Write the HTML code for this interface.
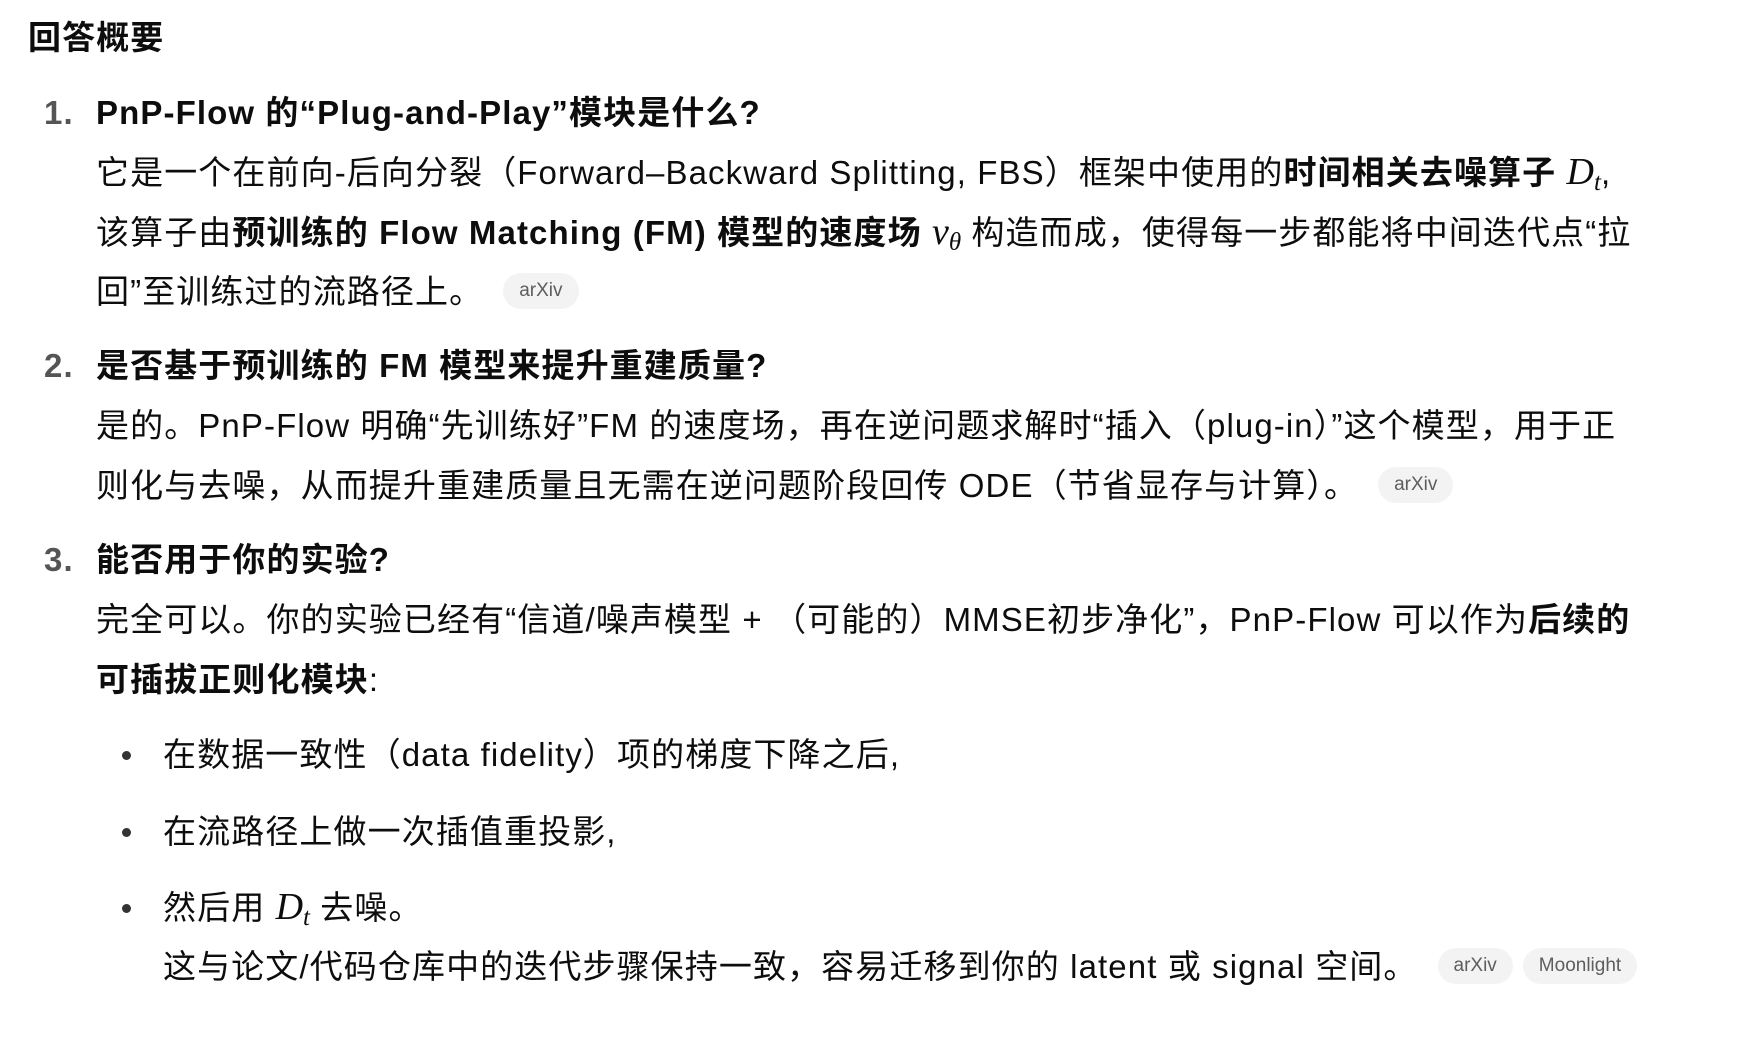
<!DOCTYPE html>
<html><head><meta charset="utf-8"><style>
html,body{margin:0;padding:0;background:#fff;width:1758px;height:1045px;overflow:hidden}
body{font-family:"Liberation Sans","Noto Sans CJK SC",sans-serif;color:#0d0d0d;font-size:33px;position:relative}
.l{position:absolute;white-space:nowrap;line-height:60px;height:60px;letter-spacing:1.1px}
b{font-weight:700}
.n{color:#555;font-weight:700}
.m{font-family:"Liberation Serif","DejaVu Serif",serif;font-style:italic;font-size:38px;letter-spacing:0}
.m sub{font-size:25px;vertical-align:-6px}
.chip{display:inline-block;background:#f3f3f3;color:#5d5d5d;font-size:19px;line-height:36px;height:36px;padding:0 16px;border-radius:18px;vertical-align:middle;margin-left:20px;position:relative;top:-3px;letter-spacing:0}
.dot{position:absolute;width:9px;height:9px;border-radius:50%;background:#333}
</style></head><body>
<div class="l" style="left:28px;top:8px;font-weight:700;font-size:33px">回答概要</div>

<div class="l n" style="left:44px;top:83px">1.</div>
<div class="l" style="left:96px;top:83px"><b>PnP-Flow 的“Plug-and-Play”模块是什么?</b></div>
<div class="l" style="left:96px;top:142px">它是一个在前向-后向分裂（Forward–Backward Splitting, FBS）框架中使用的<b>时间相关去噪算子</b> <span class="m">D<sub>t</sub></span>,</div>
<div class="l" style="left:96px;top:202px">该算子由<b>预训练的 Flow Matching (FM) 模型的速度场</b> <span class="m">v<sub>θ</sub></span> 构造而成，使得每一步都能将中间迭代点“拉</div>
<div class="l" style="left:96px;top:262px">回”至训练过的流路径上。<span class="chip">arXiv</span></div>

<div class="l n" style="left:44px;top:336px">2.</div>
<div class="l" style="left:96px;top:336px"><b>是否基于预训练的 FM 模型来提升重建质量?</b></div>
<div class="l" style="left:96px;top:396px">是的。PnP-Flow 明确“先训练好”FM 的速度场，再在逆问题求解时“插入（plug-in）”这个模型，用于正</div>
<div class="l" style="left:96px;top:456px">则化与去噪，从而提升重建质量且无需在逆问题阶段回传 ODE（节省显存与计算）。<span class="chip">arXiv</span></div>

<div class="l n" style="left:44px;top:530px">3.</div>
<div class="l" style="left:96px;top:530px"><b>能否用于你的实验?</b></div>
<div class="l" style="left:96px;top:590px">完全可以。你的实验已经有“信道/噪声模型 + （可能的）MMSE初步净化”，PnP-Flow 可以作为<b>后续的</b></div>
<div class="l" style="left:96px;top:650px"><b>可插拔正则化模块</b>:</div>

<div class="dot" style="left:122px;top:751px"></div>
<div class="l" style="left:163px;top:725px">在数据一致性（data fidelity）项的梯度下降之后,</div>
<div class="dot" style="left:122px;top:828px"></div>
<div class="l" style="left:163px;top:802px">在流路径上做一次插值重投影,</div>
<div class="dot" style="left:122px;top:904px"></div>
<div class="l" style="left:163px;top:877px">然后用 <span class="m">D<sub>t</sub></span> 去噪。</div>
<div class="l" style="left:163px;top:937px">这与论文/代码仓库中的迭代步骤保持一致，容易迁移到你的 latent 或 signal 空间。<span class="chip">arXiv</span><span class="chip" style="margin-left:10px">Moonlight</span></div>
</body></html>
